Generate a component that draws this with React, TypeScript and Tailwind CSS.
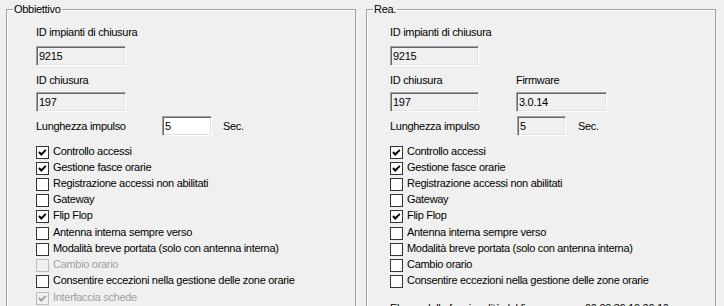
import clsx from "clsx";

interface Option {
  label: string;
  checked?: boolean;
  disabled?: boolean;
  tall?: boolean;
}

const leftOptions: Option[] = [
  { label: "Controllo accessi", checked: true },
  { label: "Gestione fasce orarie", checked: true },
  { label: "Registrazione accessi non abilitati" },
  { label: "Gateway" },
  { label: "Flip Flop", checked: true, tall: true },
  { label: "Antenna interna sempre verso" },
  { label: "Modalità breve portata (solo con antenna interna)" },
  { label: "Cambio orario", disabled: true },
  { label: "Consentire eccezioni nella gestione delle zone orarie", tall: true },
  { label: "Interfaccia schede", checked: true, disabled: true },
];

const rightOptions: Option[] = [
  { label: "Controllo accessi", checked: true },
  { label: "Gestione fasce orarie", checked: true },
  { label: "Registrazione accessi non abilitati" },
  { label: "Gateway" },
  { label: "Flip Flop", checked: true, tall: true },
  { label: "Antenna interna sempre verso" },
  { label: "Modalità breve portata (solo con antenna interna)" },
  { label: "Cambio orario" },
  { label: "Consentire eccezioni nella gestione delle zone orarie" },
];

// sunken windows-style text box
const Field = ({ value, width, enabled }: { value: string; width: string; enabled?: boolean }) => (
  <div
    className={clsx(
      "h-[20px] border border-t-[#a0a0a0] border-l-[#a0a0a0] border-r-white border-b-white pl-[2px] pt-[3px] leading-[13px] shadow-[inset_1px_1px_0_#696969,inset_-1px_-1px_0_#e3e3e3]",
      width,
      enabled ? "bg-white" : "bg-[#f0f0f0]"
    )}
  >
    {value}
  </div>
);

const CheckBox = ({ checked, disabled }: { checked?: boolean; disabled?: boolean }) => (
  <span
    className={clsx(
      "flex h-[13px] w-[13px] shrink-0 items-center justify-center border",
      disabled ? "border-[#bcbcbc] bg-[#f0f0f0]" : "border-[#333333] bg-white"
    )}
  >
    {checked && (
      <svg width="9" height="9" viewBox="0 0 9 9">
        <polyline
          points="1,4 3.3,6.5 7.8,1.8"
          fill="none"
          stroke={disabled ? "#a0a0a0" : "#000"}
          strokeWidth="1.9"
        />
      </svg>
    )}
  </span>
);

const OptionList = ({ options }: { options: Option[] }) => (
  <div className="mt-[10px] flex flex-col">
    {options.map((o) => (
      <div key={o.label} className={clsx("flex items-start gap-[4px]", o.tall ? "h-[17px]" : "h-[16px]")}>
        <CheckBox checked={o.checked} disabled={o.disabled} />
        <span className={clsx("-mt-[1px] whitespace-nowrap leading-[13px]", o.disabled && "text-[#a0a0a0]")}>
          {o.label}
        </span>
      </div>
    ))}
  </div>
);

const GroupBox = ({ title, pad, children }: { title: string; pad: string; children: React.ReactNode }) => (
  <fieldset className="h-[330px] w-[350px] shrink-0 border border-[#a0a0a0] shadow-[inset_1px_1px_0_#fff]">
    <legend className="ml-[6px] px-[1px] leading-[13px]">{title}</legend>
    <div className={pad}>{children}</div>
  </fieldset>
);

export default function App() {
  return (
    <div
      className="flex h-[306px] w-[724px] gap-[10px] overflow-hidden bg-[#f0f0f0] pl-[6px] pt-[3px] text-[11px] tracking-[-0.3px] text-black"
      style={{ fontFamily: '"Liberation Sans", Arial, sans-serif' }}
    >
      {/* Obbiettivo */}
      <GroupBox title="Obbiettivo" pad="pl-[29px]">
        <div className="mt-[10px] leading-[13px]">ID impianti di chiusura</div>
        <div className="mt-[7px]">
          <Field value="9215" width="w-[90px]" />
        </div>
        <div className="mt-[8px] leading-[13px]">ID chiusura</div>
        <div className="mt-[5px]">
          <Field value="197" width="w-[90px]" />
        </div>
        <div className="mt-[4px] flex items-center">
          <span className="w-[126px] leading-[13px]">Lunghezza impulso</span>
          <Field value="5" width="w-[50px]" enabled />
          <span className="ml-[11px] leading-[13px]">Sec.</span>
        </div>
        <OptionList options={leftOptions} />
      </GroupBox>

      {/* Rea. */}
      <GroupBox title="Rea." pad="pl-[23px]">
        <div className="mt-[10px] leading-[13px]">ID impianti di chiusura</div>
        <div className="mt-[7px]">
          <Field value="9215" width="w-[89px]" />
        </div>
        <div className="mt-[8px] grid grid-cols-[126px_1fr] leading-[13px]">
          <span>ID chiusura</span>
          <span>Firmware</span>
        </div>
        <div className="mt-[5px] grid grid-cols-[126px_1fr]">
          <Field value="197" width="w-[89px]" />
          <Field value="3.0.14" width="w-[91px]" />
        </div>
        <div className="mt-[4px] flex items-center">
          <span className="w-[127px] leading-[13px]">Lunghezza impulso</span>
          <Field value="5" width="w-[49px]" />
          <span className="ml-[12px] leading-[13px]">Sec.</span>
        </div>
        <OptionList options={rightOptions} />
        <div className="mt-[11px] flex leading-[13px]">
          <span className="w-[195px]">Elenco delle funzionalità del firmware</span>
          <span>00.00.30.10.30.10</span>
        </div>
      </GroupBox>
    </div>
  );
}
